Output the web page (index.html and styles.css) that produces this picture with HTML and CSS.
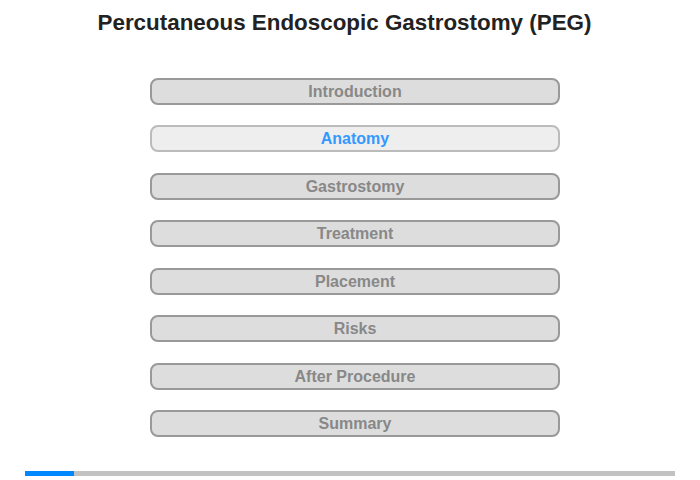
FILE: index.html
```html
<!DOCTYPE html>
<html>
<head>
<meta charset="utf-8">
<link rel="stylesheet" href="styles.css">
</head>
<body>
<div class="page">
  <h1 class="title">Percutaneous Endoscopic Gastrostomy (PEG)</h1>
  <nav class="menu">
    <div class="item">Introduction</div>
    <div class="item active">Anatomy</div>
    <div class="item">Gastrostomy</div>
    <div class="item">Treatment</div>
    <div class="item">Placement</div>
    <div class="item">Risks</div>
    <div class="item">After Procedure</div>
    <div class="item">Summary</div>
  </nav>
  <div class="progress"><div class="fill" style="width:49px"></div></div>
</div>
</body>
</html>
```
FILE: styles.css
```css
html, body { margin: 0; padding: 0; background: #fff; }
body { font-family: "Liberation Sans", Arial, sans-serif; }
.page { width: 700px; height: 480px; position: relative; }
.title {
  margin: 0;
  padding-top: 10px;
  font-size: 22.4px;
  font-weight: bold;
  color: #222;
  text-align: center;
  padding-right: 11px;
  line-height: 26px;
}
.menu {
  margin: 42px 0 0 150px;
  width: 410px;
  display: flex;
  flex-direction: column;
  gap: 20.43px;
}
.item {
  box-sizing: border-box;
  height: 27px;
  border: 2px solid #999;
  border-radius: 8px;
  background: #ddd;
  color: #888;
  font-size: 16px;
  font-weight: bold;
  text-align: center;
  line-height: 23px;
}
.item.active {
  border-color: #bbb;
  background: #eee;
  color: #3399ff;
}
.progress {
  position: absolute;
  left: 25px;
  top: 471px;
  width: 650px;
  height: 5px;
  background: #c2c2c2;
}
.fill { height: 100%; background: #0088ff; }
```
